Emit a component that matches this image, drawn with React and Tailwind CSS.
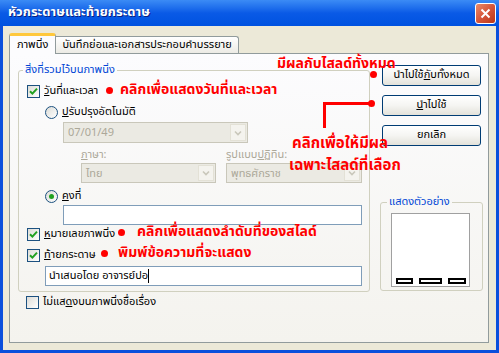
const UI = { fontFamily: 'Tahoma, "Noto Sans Thai", "Noto Sans", "DejaVu Sans", sans-serif' };

function Check({ checked }) {
  return (
    <span className="w-[13px] h-[13px] shrink-0 border border-[#1c5180] bg-gradient-to-br from-[#dcdcd7] to-white flex items-center justify-center">
      {checked && (
        <svg width="9" height="9" viewBox="0 0 9 9">
          <path d="M1 4.2 L3.4 6.6 L8 1.6" stroke="#21a121" strokeWidth="2" fill="none" />
        </svg>
      )}
    </span>
  );
}

function Radio({ checked }) {
  return (
    <span className="w-[13px] h-[13px] shrink-0 rounded-full border border-[#1c5180] bg-gradient-to-br from-[#dcdcd7] to-white flex items-center justify-center">
      {checked && <span className="w-[5px] h-[5px] rounded-full bg-[#21a121]" />}
    </span>
  );
}

function Combo({ text, w, h }) {
  return (
    <div className={`${w} ${h} border border-[#c9c7ba] bg-[#ebeae3] flex items-center`}>
      <span className="flex-1 pl-[4px] text-[#aca899] leading-none">{text}</span>
      <span className="w-[16px] h-[calc(100%-2px)] mr-[1px] bg-[#f4f3ee] border border-[#e3e1d6] flex items-center justify-center">
        <svg width="8" height="6" viewBox="0 0 8 6">
          <path d="M1 1.5 L4 4.5 L7 1.5" stroke="#c9c7ba" strokeWidth="1.6" fill="none" />
        </svg>
      </span>
    </div>
  );
}

function Btn({ children }) {
  return (
    <button className="w-[99px] h-[21px] rounded-[3px] border border-[#003c74] bg-gradient-to-b from-white via-[#f5f5f2] to-[#e3e2da] text-[11px] text-black flex items-center justify-center">
      {children}
    </button>
  );
}

function Dot({ className }) {
  return <span className={`absolute w-[7px] h-[7px] rounded-full bg-[#f00] ${className}`} />;
}

export default function App() {
  return (
    <div className="relative w-[499px] h-[353px] flex flex-col bg-[#0a4fdc] text-[11px] text-black overflow-hidden" style={UI}>
      {/* title bar */}
      <div className="h-[26px] shrink-0 flex items-center bg-gradient-to-b from-[#3b8bf5] via-[#0a5ae6] to-[#0052e0] pl-[8px] pr-[3px]">
        <span className="flex-1 text-white font-bold text-[13px] [text-shadow:1px_1px_0_#0a1f80]">หัวกระดาษและท้ายกระดาษ</span>
        <span className="w-[21px] h-[21px] rounded-[3px] border border-white bg-gradient-to-br from-[#e98a6a] via-[#d6553a] to-[#b93515] flex items-center justify-center">
          <svg width="11" height="11" viewBox="0 0 11 11">
            <path d="M1.5 1.5 L9.5 9.5 M9.5 1.5 L1.5 9.5" stroke="white" strokeWidth="2" />
          </svg>
        </span>
      </div>

      {/* body */}
      <div className="flex-1 mx-[3px] mb-[3px] bg-[#ece9d8] flex flex-col">
        {/* tabs */}
        <div className="flex items-end pl-[6px] pt-[7px] h-[27px] relative z-10">
          <div className="h-[21px] -mb-[1px] px-[7px] flex items-center bg-[#fcfcfe] border border-b-0 border-[#919b9c] border-t-[3px] border-t-[#ffc83c] rounded-t-[3px]">
            ภาพนิ่ง
          </div>
          <div className="h-[17px] px-[6px] flex items-center bg-gradient-to-b from-white to-[#ecebe5] border border-b-0 border-l-0 border-[#919b9c] rounded-tr-[3px]">
            บันทึกย่อและเอกสารประกอบคำบรรยาย
          </div>
        </div>

        {/* panel */}
        <div className="ml-[6px] w-[480px] h-[290px] border border-[#919b9c] bg-gradient-to-b from-[#fcfcfe] to-[#f4f3ee] flex">
          {/* left column */}
          <div className="ml-[8px] pt-[9px] flex flex-col">
            <fieldset className="w-[352px] border border-[#d0d0bf] rounded-[3px] pb-[5px] m-0 p-0">
              <legend className="ml-[4px] px-[2px] text-[#0046d5] leading-[14px]">สิ่งที่รวมไว้บนภาพนิ่ง</legend>
              <div className="flex flex-col pt-[8px]">
                <div className="h-[13px] ml-[8px] flex items-center gap-[4px]">
                  <Check checked />
                  <span><u>ว</u>ันที่และเวลา</span>
                </div>
                <div className="h-[13px] mt-[8px] ml-[26px] flex items-center gap-[4px]">
                  <Radio />
                  <span><u>ป</u>รับปรุงอัตโนมัติ</span>
                </div>
                <div className="mt-[3px] ml-[44px]">
                  <Combo text="07/01/49" w="w-[185px]" h="h-[21px]" />
                </div>
                <div className="h-[14px] mt-[4px] ml-[62px] flex text-[#aca899]">
                  <span className="w-[145px]"><u>ภ</u>าษา:</span>
                  <span>รูปแบบ<u>ป</u>ฏิทิน:</span>
                </div>
                <div className="mt-[2px] ml-[62px] flex gap-[10px]">
                  <Combo text="ไทย" w="w-[135px]" h="h-[20px]" />
                  <Combo text="พุทธศักราช" w="w-[136px]" h="h-[20px]" />
                </div>
                <div className="h-[13px] mt-[7px] ml-[26px] flex items-center gap-[4px]">
                  <Radio checked />
                  <span><u>ค</u>งที่</span>
                </div>
                <div className="mt-[2px] ml-[44px] w-[299px] h-[20px] border border-[#7f9db9] bg-white" />
                <div className="h-[13px] mt-[3px] ml-[8px] flex items-center gap-[4px]">
                  <Check checked />
                  <span><u>ห</u>มายเลขภาพนิ่ง</span>
                </div>
                <div className="h-[13px] mt-[8px] ml-[8px] flex items-center gap-[4px]">
                  <Check checked />
                  <span><u>ท</u>้ายกระดาษ</span>
                </div>
                <div className="mt-[4px] ml-[26px] w-[317px] h-[20px] border border-[#7f9db9] bg-white flex items-center pl-[3px]">
                  <span>นำเสนอโดย อาจารย์ปอ</span>
                  <span className="w-px h-[14px] bg-black" />
                </div>
              </div>
            </fieldset>
            <div className="h-[13px] mt-[4px] ml-[8px] flex items-center gap-[4px]">
              <Check />
              <span>ไม่แส<u>ด</u>งบนภาพนิ่งชื่อเรื่อง</span>
            </div>
          </div>

          {/* right column */}
          <div className="ml-[10px] pt-[11px] flex flex-col w-[103px]">
            <div className="ml-[2px] flex flex-col gap-[9px]">
              <Btn>นำไปใช้<u>ก</u>ับทั้งหมด</Btn>
              <Btn><u>น</u>ำไปใช้</Btn>
              <Btn>ยกเลิก</Btn>
            </div>
            <fieldset className="mt-[49px] w-[103px] border border-[#d0d0bf] rounded-[3px] m-0 p-0 pb-[3px]">
              <legend className="ml-[6px] px-[2px] text-[#0046d5] leading-[14px]">แสดงตัวอย่าง</legend>
              <div className="ml-[10px] mt-[4px] w-[79px] h-[74px] border border-[#a0a0a0] bg-white flex items-end justify-center gap-[6px] pb-[2px]">
                <span className="w-[17px] h-[6px] bg-black flex items-center justify-center"><span className="w-[13px] h-[2px] bg-white" /></span>
                <span className="w-[23px] h-[6px] bg-black flex items-center justify-center"><span className="w-[19px] h-[2px] bg-white" /></span>
                <span className="w-[18px] h-[6px] bg-black flex items-center justify-center"><span className="w-[14px] h-[2px] bg-white" /></span>
              </div>
            </fieldset>
          </div>
        </div>
      </div>

      {/* red annotations */}
      <span className="absolute left-[277px] top-[57px] text-[#f00] text-[14px] font-bold leading-none">มีผลกับไสลด์ทั้งหมด</span>
      <Dot className="left-[370px] top-[71px]" />
      <Dot className="left-[106px] top-[87px]" />
      <span className="absolute left-[120px] top-[83px] text-[#f00] text-[14px] font-bold leading-none">คลิกเพื่อแสดงวันที่และเวลา</span>
      <Dot className="left-[368px] top-[100px]" />
      <span className="absolute left-[325px] top-[102px] w-[46px] h-[3px] bg-[#f00]" />
      <span className="absolute left-[323px] top-[102px] w-[3px] h-[26px] bg-[#f00]" />
      <span className="absolute left-[292px] top-[136px] text-[#f00] text-[15px] font-bold leading-none">คลิกเพื่อให้มีผล</span>
      <span className="absolute left-[289px] top-[158px] text-[#f00] text-[15px] font-bold leading-none">เฉพาะไสลด์ที่เลือก</span>
      <Dot className="left-[118px] top-[229px]" />
      <span className="absolute left-[137px] top-[225px] text-[#f00] text-[14px] font-bold leading-none">คลิกเพื่อแสดงลำดับที่ของสไลด์</span>
      <Dot className="left-[101px] top-[250px]" />
      <span className="absolute left-[118px] top-[246px] text-[#f00] text-[14px] font-bold leading-none">พิมพ์ข้อความที่จะแสดง</span>
    </div>
  );
}
